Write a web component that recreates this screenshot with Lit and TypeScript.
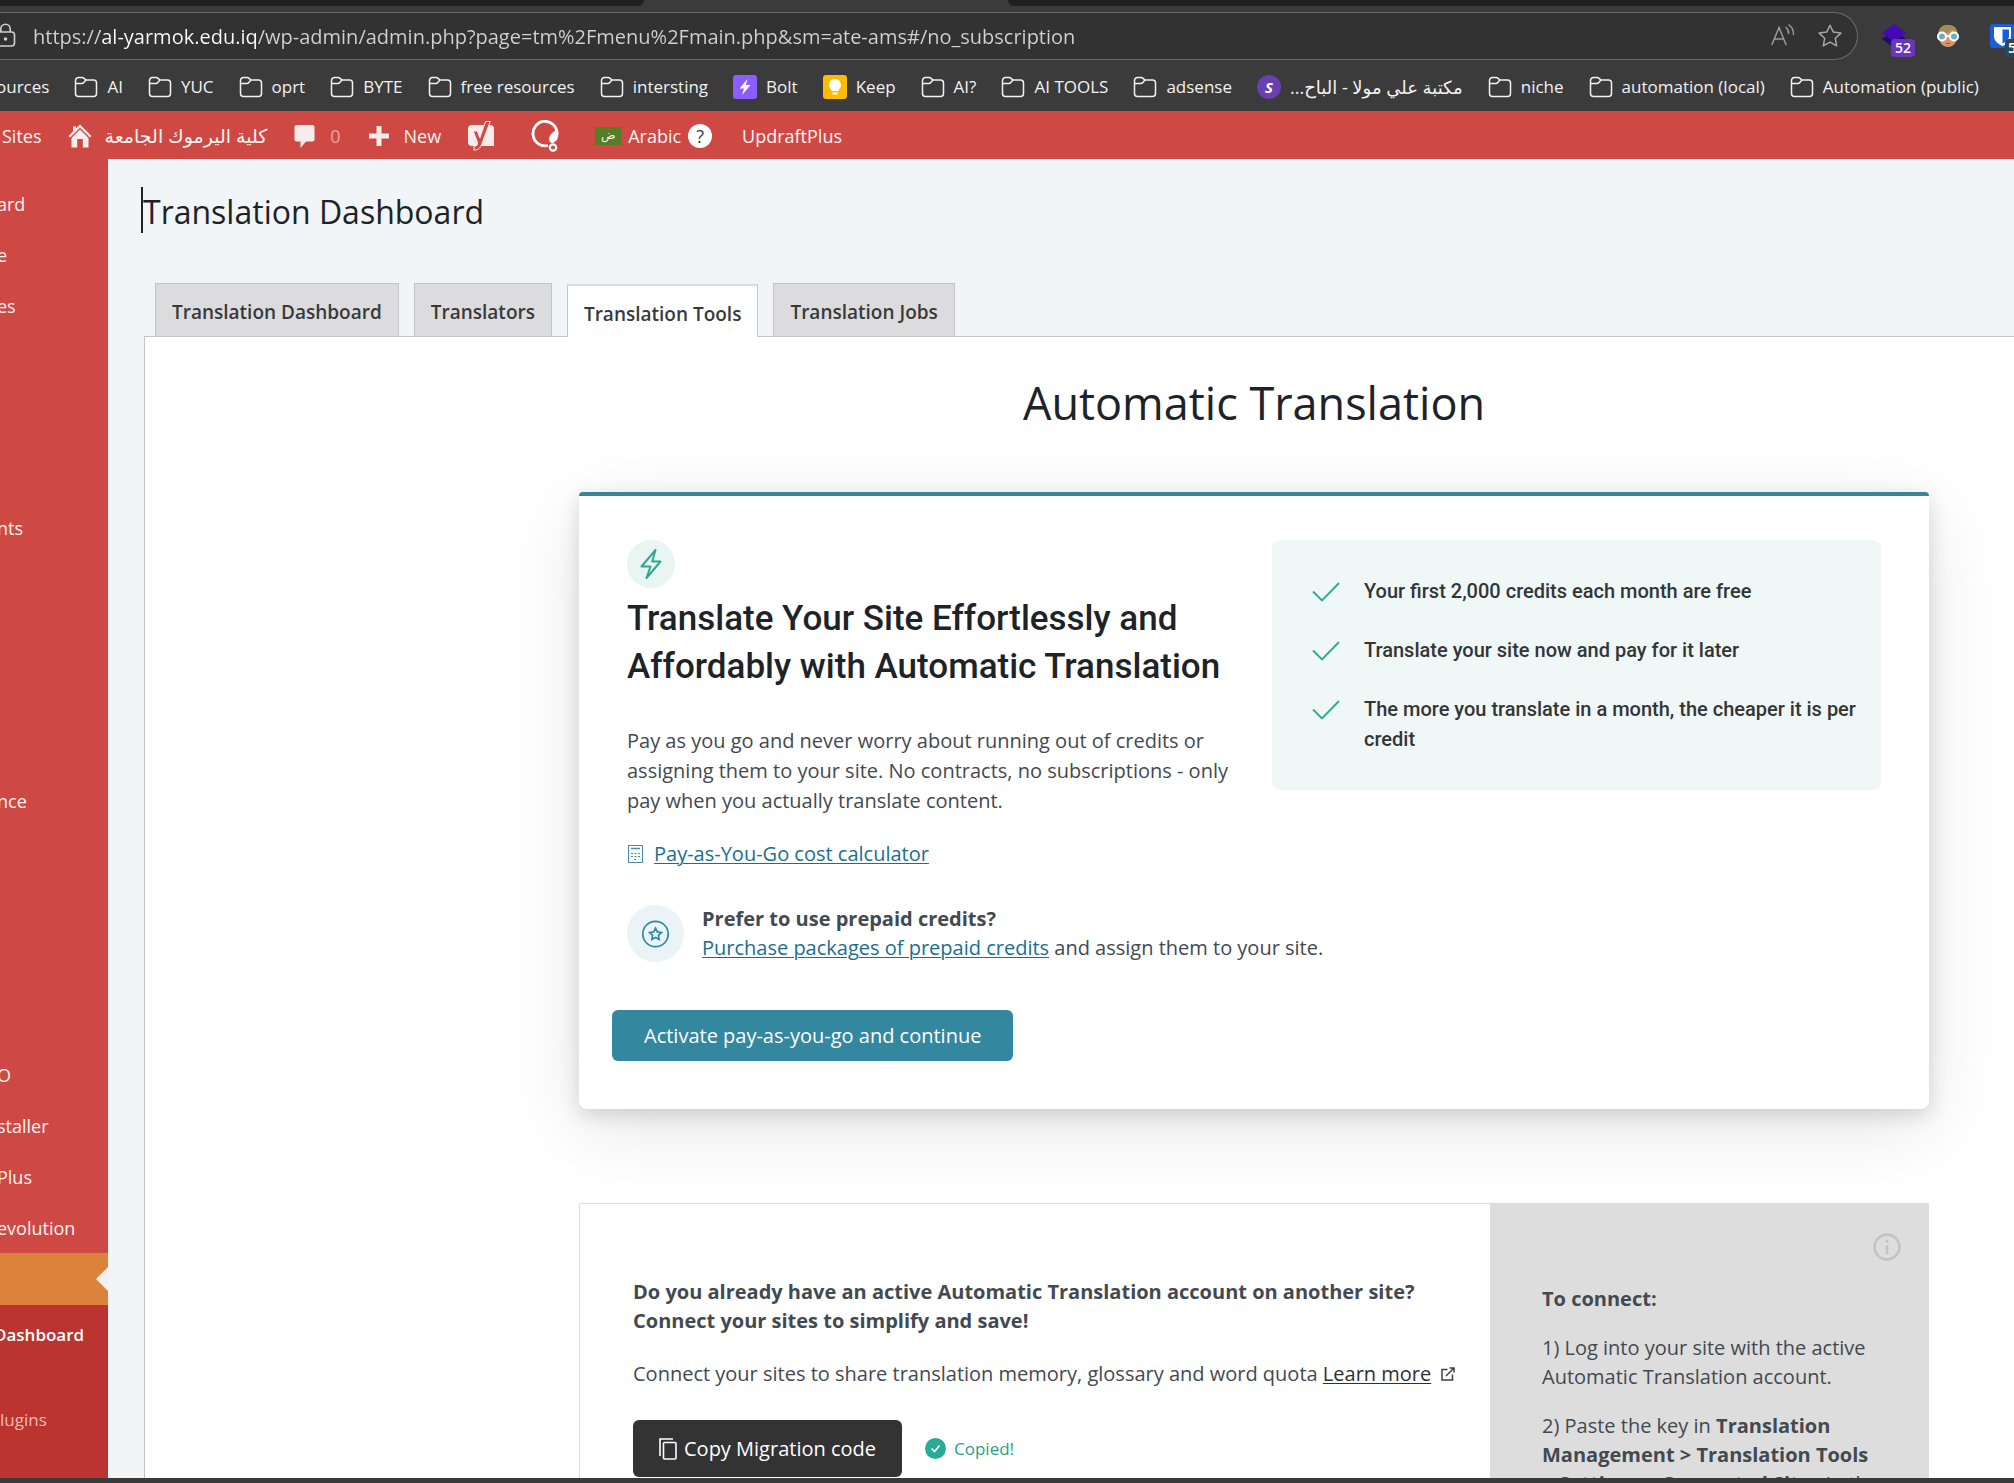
import { LitElement, html, css, svg, nothing } from "lit";
import { customElement } from "lit/decorators.js";
import { classMap } from "lit/directives/class-map.js";

const folderIcon = html`<svg class="icon24" viewBox="0 0 24 24" fill="none" stroke="#f2f2f2" stroke-width="1.5" aria-hidden="true">
  <path d="M1.5 18.5V5.5a3 3 0 0 1 3-3h3.6c.8 0 1.500.3 2 .9L12 5h7.500a3 3 0 0 1 3 3v10.500a3 3 0 0 1-3 3h-15a3 3 0 0 1-3-3z" />
  <path d="M1.500 8.500h6.300c.8 0 1.500-.3 2-.9L12 5" />
</svg>`;

const boltBadge = html`<svg class="icon24" viewBox="0 0 24 24" aria-hidden="true">
  <rect width="24" height="24" rx="3" fill="#8b5cff" />
  <path d="M14.500 4 6.500 13.500h4.500L9 20l8.500-10h-4.600z" fill="#fff" />
</svg>`;

const keepBadge = html`<svg class="icon24" viewBox="0 0 24 24" aria-hidden="true">
  <rect width="24" height="24" rx="3" fill="#fbbc04" />
  <path d="M12 4a6 6 0 0 0-3.500 10.800V16h7v-1.200A6 6 0 0 0 12 4z" fill="#fff" />
  <rect x="9.500" y="17.500" width="5" height="2" fill="#fff" />
</svg>`;

const scriptBadge = html`<span class="round-badge" aria-hidden="true">S</span>`;

type Bookmark = { label: string; icon?: unknown; rtl?: boolean };

const bookmarks: Bookmark[] = [
  { label: "ources", icon: nothing },
  { label: "AI" },
  { label: "YUC" },
  { label: "oprt" },
  { label: "BYTE" },
  { label: "free resources" },
  { label: "intersting" },
  { label: "Bolt", icon: boltBadge },
  { label: "Keep", icon: keepBadge },
  { label: "AI?" },
  { label: "AI TOOLS" },
  { label: "adsense" },
  { label: "مكتبة علي مولا - الباح...", icon: scriptBadge, rtl: true },
  { label: "niche" },
  { label: "automation (local)" },
  { label: "Automation (public)" },
];

@customElement("browser-chrome")
class BrowserChrome extends LitElement {
  static styles = css`
    :host {
      display: block;
      overflow: hidden;
      background: #3b3b3b;
      font-family: "Open Sans", "DejaVu Sans", sans-serif;
      color: #f2f2f2;
    }
    .strip {
      display: grid;
      grid-template-columns: 644px 364px 1fr;
      height: 6px;
    }
    .strip-part {
      background: #202020;
    }
    .strip-part.before {
      border-bottom-right-radius: 8px;
    }
    .strip-part.after {
      grid-column: 3;
      border-bottom-left-radius: 8px;
    }
    .toolbar {
      display: flex;
      align-items: center;
      gap: 24px;
      padding-top: 6px;
    }
    .address {
      display: flex;
      align-items: center;
      flex: 1;
      box-sizing: border-box;
      height: 48px;
      gap: 17px;
      padding-right: 15px;
      border: 1px solid #6b6b6b;
      border-left: 0;
      border-radius: 0 24px 24px 0;
      background: #323232;
    }
    .lock {
      width: 16px;
      height: 28px;
      flex: none;
    }
    .url {
      flex: 1;
      min-width: 0;
      padding: 1px 0 0;
      border: 0;
      outline: 0;
      background: linear-gradient(90deg, #d2d2d2 67px, #ffffff 67px 224px, #d2d2d2 224px);
      background-clip: text;
      -webkit-background-clip: text;
      color: transparent;
      font: 20px/30px "Open Sans", sans-serif;
    }
    .plain {
      display: flex;
      padding: 0;
      border: 0;
      background: none;
      color: inherit;
    }
    .actions {
      display: flex;
      gap: 23px;
    }
    .extensions {
      display: flex;
      gap: 30px;
      flex: none;
    }
    .icon24 {
      display: block;
      width: 24px;
      height: 24px;
      flex: none;
    }
    .ext {
      position: relative;
    }
    .count {
      position: absolute;
      left: 9px;
      top: 15px;
      min-width: 24px;
      border-radius: 4px;
      background: #6a35b8;
      color: #fff;
      font: 600 14px/18px "Open Sans", sans-serif;
      text-align: center;
    }
    .count.teal {
      left: 15px;
      background: #26495c;
      text-indent: -10px;
    }
    .bookmarks {
      display: flex;
      align-items: center;
      justify-content: space-between;
      height: 49px;
      margin-left: -4px;
      padding: 2px 35px 0 0;
    }
    .bookmark {
      display: flex;
      align-items: center;
      gap: 9px;
      color: inherit;
      font-size: 17px;
      line-height: 24px;
      text-decoration: none;
      white-space: nowrap;
    }
    .rtl {
      font-size: 18px;
    }
    .round-badge {
      width: 24px;
      height: 24px;
      border-radius: 50%;
      background: #6c3fb0;
      color: #fff;
      font: italic 700 15px/24px "Open Sans", sans-serif;
      text-align: center;
    }
  `;

  render() {
    return html`
      <div class="strip"><div class="strip-part before"></div><div class="strip-part after"></div></div>
      <div class="toolbar">
        <div class="address">
          <svg class="lock" viewBox="0 0 16 28" fill="none" stroke="#d0d0d0" stroke-width="1.600" aria-hidden="true">
            <rect x="-4" y="10" width="18.500" height="14" rx="3" />
            <path d="M.8 10V7a4.700 4.700 0 0 1 9.400 0v3" />
            <circle cx="5.500" cy="17" r="1" fill="#d0d0d0" />
          </svg>
          <input class="url" type="text" aria-label="Address" spellcheck="false"
            value="https://al-yarmok.edu.iq/wp-admin/admin.php?page=tm%2Fmenu%2Fmain.php&sm=ate-ams#/no_subscription" />
          <div class="actions">
            <button class="plain" aria-label="Read aloud">
              <svg class="icon24" viewBox="0 0 24 24" fill="none" stroke="#9b9b9b" stroke-width="1.500" stroke-linecap="round">
                <path d="M1 20.500 8 3.500l7 17M3.500 15h9M15 3.500c1.800 1.400 2.600 3.400 2.600 6M18 1c3 2 4.500 5.200 4.500 9.500" />
              </svg>
            </button>
            <button class="plain" aria-label="Add to favourites">
              <svg class="icon24" viewBox="0 0 24 24" fill="none" stroke="#a6a6a6" stroke-width="1.500" stroke-linejoin="round">
                <path d="m12 1.200 3.300 6.900 7.600 1-5.600 5.200 1.400 7.500-6.700-3.700-6.700 3.700 1.400-7.500L1.100 9.100l7.600-1z" />
              </svg>
            </button>
          </div>
        </div>
        <div class="extensions">
          <button class="plain ext" aria-label="Extension, 52 items">
            <svg class="icon24" viewBox="0 0 24 24">
              <path d="M12 6 24 15 12 24 0 15z" fill="#1f0a78" />
              <path d="M12 0 24 9 12 18 0 9z" fill="#4409b5" />
            </svg>
            <span class="count">52</span>
          </button>
          <button class="plain" aria-label="Profile extension">
            <svg class="icon24" viewBox="0 0 24 24">
              <path d="M3 12C3 4 7 1 12 1s9 3 9 11c0 7-4 11-9 11S3 19 3 12z" fill="#dd9568" />
              <path d="M2.500 11C2 4 6 1 12 1s10 3 9.500 10c-2-1-4-3-5-6-3 4-8 5-14 6z" fill="#a58a5c" />
              <circle cx="6" cy="12.500" r="4" fill="#6fb0b8" stroke="#fff" stroke-width="2" />
              <circle cx="18" cy="12.500" r="4" fill="#6fb0b8" stroke="#fff" stroke-width="2" />
              <path d="M10 12h4" stroke="#fff" stroke-width="2" />
              <path d="M10 19.500h4" stroke="#a4573b" stroke-width="1.200" />
            </svg>
          </button>
          <button class="plain ext" aria-label="Password manager">
            <svg class="icon24" viewBox="0 0 24 24">
              <rect width="24" height="24" rx="3" fill="#175ddc" />
              <path d="M4 3h17v9c0 5-4 8-8.500 10C8 20 4 17 4 12z" fill="#fff" />
              <path d="M12.500 5.500H19V12c0 3.500-3 5.800-6.500 7.500z" fill="#175ddc" />
            </svg>
            <span class="count teal">5</span>
          </button>
        </div>
      </div>
      <nav class="bookmarks" aria-label="Bookmarks">
        ${bookmarks.map(
          (b) => html`<a class="bookmark" href="#">${b.icon ?? folderIcon}<span class=${classMap({ rtl: !!b.rtl })} dir=${b.rtl ? "rtl" : "ltr"}>${b.label}</span></a>`
        )}
      </nav>
    `;
  }
}

@customElement("admin-bar")
class AdminBar extends LitElement {
  static styles = css`
    :host {
      display: flex;
      align-items: center;
      height: 46px;
      gap: 26px;
      padding: 2px 0 0 2px;
      background: #cf4944;
      color: #fdf3f2;
      font: 18px/26px "Open Sans", "DejaVu Sans", sans-serif;
    }
    .item {
      display: flex;
      align-items: center;
      gap: 13px;
      color: inherit;
      text-decoration: none;
      white-space: nowrap;
    }
    .tight {
      gap: 7px;
    }
    .spaced {
      margin-left: 10px;
    }
    .icon {
      display: block;
      width: 24px;
      height: 24px;
      flex: none;
    }
    .logo {
      display: block;
      width: 28px;
      height: 32px;
    }
    .arabic {
      font-size: 19px;
    }
    .zero {
      color: #f0a3a0;
    }
    .flag {
      width: 26px;
      height: 18px;
      background: #557d26;
      font-size: 12px;
      line-height: 16px;
      text-align: center;
    }
    .help {
      width: 24px;
      height: 24px;
      margin-right: 4px;
      border-radius: 50%;
      background: #fff;
      color: #3d3d3d;
      line-height: 24px;
      text-align: center;
    }
  `;

  render() {
    return html`
      <a class="item" href="#">Sites</a>
      <a class="item" href="#">
        <svg class="icon" viewBox="0 0 24 24" fill="#f7ecec" aria-hidden="true">
          <path d="M12 .5 23.500 12l-1.600 1.500L12 3.700 2.100 13.500.5 12 5 7.500V2.500h3v2z" />
          <path d="M12 5.500 20.500 14v9.500h-5.700V15H9.200v8.500H3.500V14z" />
        </svg>
        <span class="arabic" dir="rtl">كلية اليرموك الجامعة</span>
      </a>
      <a class="item" href="#">
        <svg class="icon" viewBox="0 0 24 24" fill="#f7ecec" aria-hidden="true">
          <path d="M3.500 1h16a2 2 0 0 1 2 2v12.500a2 2 0 0 1-2 2H13L7.500 24v-6.500h-4a2 2 0 0 1-2-2V3a2 2 0 0 1 2-2z" />
        </svg>
        <span class="zero">0</span>
      </a>
      <a class="item" href="#">
        <svg class="icon" viewBox="0 0 24 24" fill="#f7ecec" aria-hidden="true"><path d="M9.500 2h5v7.500H22v5h-7.500V22h-5v-7.500H2v-5h7.500z" /></svg>
        New
      </a>
      <a class="item" href="#" aria-label="Yoast SEO">
        <svg class="logo" viewBox="0 0 28 32">
          <path d="M5 5h18a4 4 0 0 1 4 4v17H5a4 4 0 0 1-4-4V9a4 4 0 0 1 4-4z" fill="#f7ecec" />
          <path d="M18.500 1.500h4.700L15 23.500c-1.600 4.600-3.600 6.500-8 6.700v-3.700c2.600-.4 3.600-1.500 3.600-3.800L6.200 11h4.200l2.400 7z" fill="#cf4944" stroke="#f7ecec" stroke-width="1" />
        </svg>
      </a>
      <a class="item spaced" href="#" aria-label="Plugin settings">
        <svg class="logo" viewBox="0 0 28 32" fill="none" stroke="#fff">
          <path d="M17 25.500A12 12.300 0 1 1 26 14" stroke-width="2.800" />
          <path d="M26.600 9c1.800 6 .4 11.500-3.600 13.500-3 1.500-5.500-1-4.800-4.500.8-4 4.500-6.500 8.400-9z" fill="#fff" stroke="none" />
          <circle cx="22" cy="27.500" r="3.200" stroke-width="2.200" />
        </svg>
      </a>
      <a class="item tight spaced" href="#"><span class="flag">ض</span>Arabic<span class="help">?</span></a>
      <a class="item" href="#">UpdraftPlus</a>
    `;
  }
}

const menuGroups: string[][] = [
  ["ard", "e", "es"],
  ["nts"],
  ["nce"],
  ["O", "staller", "Plus", "evolution"],
];

@customElement("side-menu")
class SideMenu extends LitElement {
  static styles = css`
    :host {
      display: block;
      overflow: hidden;
      background: #cf4944;
      color: #fdf3f2;
      font: 18px/26px "Open Sans", sans-serif;
    }
    .group {
      margin: 0;
      padding: 0;
      list-style: none;
    }
    .g0 {
      margin-top: 19px;
    }
    .g1 {
      margin-top: 171px;
    }
    .g2 {
      margin-top: 222px;
    }
    .g3 {
      margin-top: 223px;
    }
    .link {
      display: flex;
      align-items: center;
      height: 51px;
      margin-left: -3px;
      color: inherit;
      text-decoration: none;
    }
    .current {
      display: flex;
      align-items: center;
      justify-content: flex-end;
      height: 52px;
      background: #dd823b;
    }
    .arrow {
      width: 12px;
      height: 24px;
    }
    .submenu {
      margin: 0;
      padding: 13px 0 400px;
      list-style: none;
      background: #bb3430;
    }
    .sub {
      display: flex;
      align-items: center;
      height: 34px;
      margin-bottom: 51px;
      color: #f1b9b6;
      font-size: 17px;
      text-decoration: none;
    }
    .sub.active {
      margin-left: -6px;
      color: #fff;
      font-weight: 600;
    }
  `;

  render() {
    return html`
      ${menuGroups.map(
        (items, i) => html`<ul class="group g${i}">
          ${items.map((t) => html`<li><a class="link" href="#">${t}</a></li>`)}
        </ul>`
      )}
      <a class="current" href="#" aria-label="Current section">
        <svg class="arrow" viewBox="0 0 12 24" aria-hidden="true"><path d="M12 0v24L0 12z" fill="#f1f1f1" /></svg>
      </a>
      <ul class="submenu">
        <li><a class="sub active" href="#">Dashboard</a></li>
        <li><a class="sub" href="#">lugins</a></li>
      </ul>
    `;
  }
}

const tabs = ["Translation Dashboard", "Translators", "Translation Tools", "Translation Jobs"];

const benefits = [
  "Your first 2,000 credits each month are free",
  "Translate your site now and pay for it later",
  "The more you translate in a month, the cheaper it is per credit",
];

const starPath = svg`<path d="m14 8.200 1.800 3.700 4.100.6-3 2.900.7 4.100-3.600-2-3.600 2 .7-4.100-3-2.900 4.100-.6z" />`;

@customElement("translation-page")
class TranslationPage extends LitElement {
  static styles = css`
    :host {
      display: flex;
      flex-direction: column;
      min-width: 0;
      background: #f1f5f8;
      color: #434950;
      font: 20px/30px "Open Sans", sans-serif;
    }
    h1,
    h2,
    h3,
    p,
    ul {
      margin: 0;
      padding: 0;
      font-weight: 400;
    }
    a {
      color: #186f91;
      text-underline-offset: 2px;
      text-decoration-thickness: 1px;
    }
    .title {
      margin: 28px 0 50px 33px;
      padding-top: 4px;
      border-left: 2px solid #1d2327;
      color: #1d2327;
      font-size: 32px;
      line-height: 42px;
    }
    .tabs {
      display: flex;
      gap: 15px;
      padding-left: 47px;
    }
    .tab {
      box-sizing: border-box;
      height: 53px;
      padding: 12px 16px 0;
      border: 1px solid #c3c4c7;
      border-bottom: 0;
      background: #dcdcde;
      color: #38393b;
      font-size: 19px;
      font-weight: 600;
      line-height: 32px;
      text-decoration: none;
      white-space: nowrap;
    }
    .tab.active {
      z-index: 1;
      margin: 1px 0 -1px;
      border-top: 2px solid #dcdcde;
      background: #fff;
    }
    .panel {
      flex: 1;
      margin-left: 36px;
      padding: 36px 85px 0 434px;
      border: solid #c3c4c7;
      border-width: 1px 0 0 1px;
      background: #fff;
    }
    .headline {
      margin-bottom: 59px;
      color: #1d2327;
      font-size: 45px;
      line-height: 60px;
      text-align: center;
    }
    .card {
      padding: 44px 48px 48px;
      border-top: 4px solid #3a8495;
      border-radius: 4px 4px 8px 8px;
      background: #fff;
      box-shadow: 0 20px 80px rgba(0, 0, 0, 0.1), 0 6px 20px rgba(0, 0, 0, 0.14);
    }
    .intro {
      display: grid;
      grid-template-columns: minmax(0, 1fr) minmax(0, 1fr);
      gap: 36px;
      align-items: start;
    }
    .bolt {
      display: block;
      width: 48px;
      height: 48px;
      margin-bottom: 7px;
    }
    .pitch {
      margin-bottom: 35px;
      color: #1d2327;
      font: 500 35px/48px Roboto, sans-serif;
    }
    .benefits {
      display: grid;
      gap: 29px;
      padding: 36px 20px 36px 40px;
      border-radius: 8px;
      background: #eff8f7;
      color: #333537;
      font: 500 20px/30px Roboto, sans-serif;
      list-style: none;
    }
    .benefit {
      display: grid;
      grid-template-columns: 28px 1fr;
      gap: 24px;
    }
    .check {
      width: 28px;
      height: 20px;
      margin-top: 6px;
    }
    .calc {
      display: flex;
      align-items: center;
      gap: 10px;
      margin-top: 23px;
    }
    .calc-icon {
      width: 17px;
      height: 20px;
    }
    .prepaid {
      display: flex;
      align-items: center;
      gap: 18px;
      margin-top: 35px;
      line-height: 29px;
    }
    .star {
      width: 57px;
      height: 57px;
      flex: none;
    }
    .strong {
      font-weight: 700;
    }
    .primary {
      display: block;
      height: 51px;
      margin: 48px 0 0 -15px;
      padding: 0 32px;
      border: 0;
      border-radius: 6px;
      background: #33879e;
      color: #fff;
      font: 20px/30px "Open Sans", sans-serif;
    }
    .connect {
      display: grid;
      grid-template-columns: minmax(0, 1fr) 439px;
      margin-top: 94px;
      line-height: 29px;
    }
    .connect-main {
      padding: 73px 36px 60px 53px;
      border: 1px solid #ddd;
      border-right: 0;
    }
    .share {
      margin: 24px 0 32px;
      white-space: nowrap;
    }
    .learn {
      color: #2c2f33;
    }
    .external {
      width: 14px;
      height: 14px;
      margin-left: 10px;
    }
    .copy-row {
      display: flex;
      align-items: center;
      gap: 23px;
    }
    .copy {
      display: flex;
      align-items: center;
      gap: 7px;
      height: 57px;
      padding: 0 26px;
      border: 0;
      border-radius: 6px;
      background: #333;
      color: #fff;
      font: 20px/30px "Open Sans", sans-serif;
    }
    .copy-icon {
      width: 18px;
      height: 22px;
    }
    .copied {
      display: flex;
      align-items: center;
      gap: 8px;
      color: #2b9f89;
      font-size: 17px;
    }
    .copied-icon {
      width: 21px;
      height: 21px;
    }
    .help {
      display: grid;
      gap: 20px;
      align-content: start;
      padding: 30px 50px 60px 52px;
      background: #ddd;
    }
    .info {
      width: 28px;
      height: 28px;
      justify-self: end;
      margin: 0 -22px 3px 0;
    }
  `;

  render() {
    return html`
      <h1 class="title">Translation Dashboard</h1>
      <nav class="tabs" aria-label="Translation management">
        ${tabs.map((t) => html`<a href="#" class=${classMap({ tab: true, active: t === "Translation Tools" })}>${t}</a>`)}
      </nav>
      <main class="panel">
        <h2 class="headline">Automatic Translation</h2>
        <section class="card">
          <div class="intro">
            <div>
              <svg class="bolt" viewBox="0 0 48 48" aria-hidden="true">
                <circle cx="24" cy="24" r="24" fill="#e8f5f2" />
                <path d="M28.500 10 14.500 26.500h9L19.500 38l14-16.500h-8.300z" fill="none" stroke="#2fa892" stroke-width="2" stroke-linejoin="round" />
              </svg>
              <h3 class="pitch">Translate Your Site Effortlessly and Affordably with Automatic Translation</h3>
              <p>Pay as you go and never worry about running out of credits or assigning them to your site. No contracts, no subscriptions - only pay when you actually translate content.</p>
            </div>
            <ul class="benefits">
              ${benefits.map(
                (b) => html`<li class="benefit">
                  <svg class="check" viewBox="0 0 28 20" fill="none" stroke="#2fa892" stroke-width="1.800" aria-hidden="true"><path d="m1 9.500 9 9L27 1" /></svg>
                  <span>${b}</span>
                </li>`
              )}
            </ul>
          </div>
          <div class="calc">
            <svg class="calc-icon" viewBox="0 0 17 20" fill="none" stroke="#4590a5" aria-hidden="true">
              <rect x="1.500" y="1.500" width="14" height="17" />
              <path d="M4 4.500h9" stroke-width="1.500" />
              <path d="M4 9.500h9M4 12.500h9M7 15.500h3" stroke-dasharray="2 1.500" />
            </svg>
            <a href="#">Pay-as-You-Go cost calculator</a>
          </div>
          <div class="prepaid">
            <svg class="star" viewBox="0 0 57 57" aria-hidden="true">
              <circle cx="28.500" cy="28.500" r="28.500" fill="#eaf3f6" />
              <g transform="translate(14.500 15)" fill="none" stroke="#33879e" stroke-width="1.700">
                <circle cx="14" cy="14" r="12.700" />
                ${starPath}
              </g>
            </svg>
            <div>
              <p class="strong">Prefer to use prepaid credits?</p>
              <p><a href="#">Purchase packages of prepaid credits</a> and assign them to your site.</p>
            </div>
          </div>
          <button class="primary">Activate pay-as-you-go and continue</button>
        </section>
        <section class="connect">
          <div class="connect-main">
            <p class="strong">Do you already have an active Automatic Translation account on another site?<br />Connect your sites to simplify and save!</p>
            <p class="share">Connect your sites to share translation memory, glossary and word quota <a class="learn" href="#">Learn more</a><svg class="external" viewBox="0 0 14 14" fill="none" stroke="#3c4045" stroke-width="1.500" aria-hidden="true">
                <path d="M6.500 2.500H1v10.500h10.500V7.500M5 9l7.500-7.500M8.500 1H13v4.500" />
              </svg></p>
            <div class="copy-row">
              <button class="copy">
                <svg class="copy-icon" viewBox="0 0 18 22" fill="none" stroke="#fff" stroke-width="1.600" aria-hidden="true">
                  <path d="M1 18V1h13" />
                  <rect x="4.500" y="4.500" width="12.500" height="16.500" rx="1" />
                </svg>
                Copy Migration code
              </button>
              <span class="copied" role="status">
                <svg class="copied-icon" viewBox="0 0 21 21" aria-hidden="true">
                  <circle cx="10.500" cy="10.500" r="10.500" fill="#27ad95" />
                  <path d="m6.500 10.500 3 3 5-6" fill="none" stroke="#fff" stroke-width="1.600" />
                </svg>
                Copied!
              </span>
            </div>
          </div>
          <aside class="help">
            <svg class="info" viewBox="0 0 28 28" fill="none" stroke="#c3c3c3" stroke-width="2.600" aria-hidden="true">
              <circle cx="14" cy="14" r="12.400" />
              <path d="M14 12.500v8.500M14 6.800v3" />
            </svg>
            <p class="strong">To connect:</p>
            <p>1) Log into your site with the active Automatic Translation account.</p>
            <p>2) Paste the key in <b>Translation Management &gt; Translation Tools &gt; Settings &gt; Connected Sites</b> in the</p>
          </aside>
        </section>
      </main>
    `;
  }
}

@customElement("app-root")
class AppRoot extends LitElement {
  static styles = css`
    :host {
      display: flex;
      flex-direction: column;
      height: 100vh;
      overflow: hidden;
    }
    .fixed {
      flex: none;
    }
    .body {
      display: grid;
      grid-template-columns: 108px minmax(0, 1fr);
      grid-template-rows: max-content;
      flex: 1;
      min-height: 0;
      overflow: hidden;
    }
    .bottom {
      height: 5px;
      flex: none;
      background: #3a3a3a;
    }
  `;

  render() {
    return html`
      <browser-chrome class="fixed"></browser-chrome>
      <admin-bar class="fixed"></admin-bar>
      <div class="body">
        <side-menu></side-menu>
        <translation-page></translation-page>
      </div>
      <div class="bottom"></div>
    `;
  }
}
